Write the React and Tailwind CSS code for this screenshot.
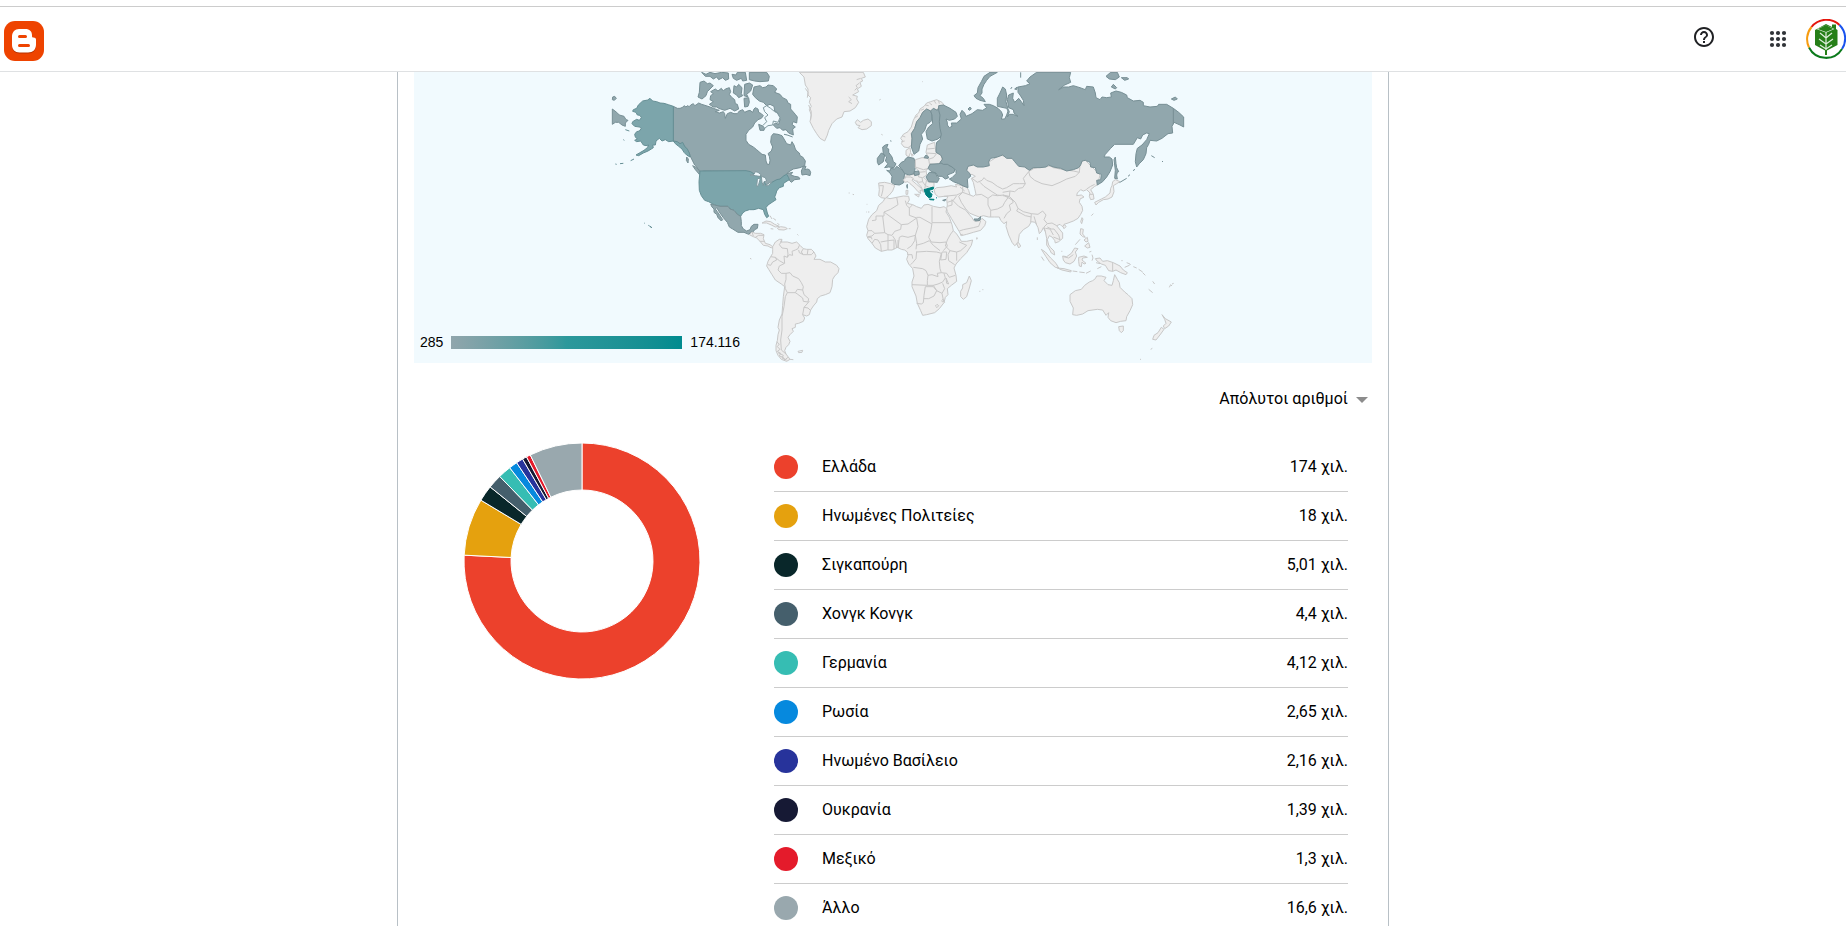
import React, { useState } from "react";

const countries = [
  { name: "Ελλάδα", label: "174 χιλ.", value: 174116, color: "#ec412c" },
  { name: "Ηνωμένες Πολιτείες", label: "18 χιλ.", value: 18000, color: "#e5a10e" },
  { name: "Σιγκαπούρη", label: "5,01 χιλ.", value: 5010, color: "#09272a" },
  { name: "Χονγκ Κονγκ", label: "4,4 χιλ.", value: 4400, color: "#455f6c" },
  { name: "Γερμανία", label: "4,12 χιλ.", value: 4120, color: "#36bdb3" },
  { name: "Ρωσία", label: "2,65 χιλ.", value: 2650, color: "#0689de" },
  { name: "Ηνωμένο Βασίλειο", label: "2,16 χιλ.", value: 2160, color: "#27339b" },
  { name: "Ουκρανία", label: "1,39 χιλ.", value: 1390, color: "#161934" },
  { name: "Μεξικό", label: "1,3 χιλ.", value: 1300, color: "#e41b2b" },
  { name: "Άλλο", label: "16,6 χιλ.", value: 16600, color: "#99a8ae" },
];

// map fills
const NONE = { fill: "#eeeeee", stroke: "#c8c8c8" };
const LOW = { fill: "#91a7ad", stroke: "#778f95" };
const MID = { fill: "#7ca5ab", stroke: "#668f95" };
const HIGH = { fill: "#00807f", stroke: "#00807f" };
const LINE = { fill: "none", stroke: "#c8c8c8" };
const WATER = { fill: "#f1fafe", stroke: "#7f989e" };

// every region is drawn around its own origin
const regions = [
  {
    name: "north-america",
    at: "translate(558 -21)",
    shapes: [
      [LOW, "M220 124L232 130 240 130 248 127 252 122 258 126 262 122 268 125 272 120 280 116 284 122 288 120 296 114 305 118 318 122 330 126 340 130 352 134 358 136 346 140 358 144 370 140 374 146 376 160 382 146 392 142 402 146 412 146 418 138 428 134 434 142 442 138 450 136 458 142 462 132 466 128 474 132 476 142 484 146 490 152 484 160 474 164 464 174 458 186 446 196 438 208 438 226 446 238 460 246 470 254 486 268 496 270 498 288 502 298 508 298 510 286 508 274 504 266 514 258 518 246 512 232 514 214 520 206 534 208 546 212 552 222 560 236 572 240 576 230 582 240 586 252 590 258 598 264 600 272 608 276 616 288 614 302 600 308 580 312 570 318 560 326 578 322 572 330 584 334 596 336 600 342 584 344 574 352 568 346 560 334 540 344 520 352 505 358 490 362 438 320 310 318 300 322 294 310 284 300 278 288 272 276 268 264 254 244 240 236 228 232 220 228Z"],
      [LOW, "M604 318L610 304 618 304 614 314 622 312 628 314 632 322 630 332 618 328 606 330Z"],
      [LOW, "M278 302L290 308 302 322 298 328 286 314ZM260 276l5 6 -1 12 -5 -8Z"],
      [LOW, "M300 52L312 48 322 56 330 54 340 62 330 72 322 80 318 92 306 102 294 96 298 82Z"],
      [LOW, "M332 92L340 86 332 80 346 72 354 78 364 70 370 78 376 72 388 68 392 80 388 88 394 96 404 104 406 116 412 118 416 132 404 138 390 130 374 136 356 130 350 126 340 126 328 118 340 110 330 104Z"],
      [LOW, "M402 62L410 66 416 58 426 68 424 86 428 92 416 98 410 90 400 84ZM434 58L448 54 458 60 452 78 440 88 444 96 432 92ZM432 100L446 98 448 112 444 124 434 126Z"],
      [LOW, "M462 66L480 62 488 68 498 66 504 60 520 62 530 72 524 82 540 88 548 98 560 104 564 114 572 118 572 132 586 148 592 156 590 174 580 170 576 178 586 186 578 192 580 210 566 204 558 194 548 196 540 188 530 190 520 180 526 174 536 178 540 164 532 142 524 138 522 124 510 118 500 122 490 112 478 108 466 98 458 88Z"],
      [LOW, "M476 178L486 182 494 188 492 196 480 196ZM504 146l8 4 -2 10 -8 -4ZM552 208l10 2 16 6"],
      [LOW, "M305 22L318 28 330 22 345 26 365 22 385 24 386 42 376 46 368 38 356 44 350 36 340 42 330 34 316 34ZM396 28L408 30 412 22 436 22 440 46 428 48 424 40 410 46 400 40ZM448 22L500 22 508 34 505 48 480 50 464 48 448 44Z"],
      [LOW, "M37 132L50 142 58 150 72 154 78 164 84 166 76 174 76 184 66 180 56 172 46 172 37 178ZM38 96l6 -2 5 6 -6 6 -6 -2Z"],
      [MID, "M220 124L205 119 192 115 180 114 170 110 158 108 150 100 143 105 128 108 115 120 110 130 100 134 98 139 108 142 112 150 120 151 124 158 118 166 110 163 98 170 96 176 104 184 118 186 124 190 118 198 110 200 104 208 106 216 112 222 104 226 110 230 122 228 130 240 138 242 146 240 142 248 132 256 118 264 108 270 116 272 130 264 144 258 154 252 160 248 158 240 166 240 168 228 178 220 186 228 196 224 206 230 220 228Z"],
      [MID, "M220 228L232 230 240 236 248 232 254 244 262 252 268 264 270 276 260 270 252 262 246 252 236 244 226 236Z"],
      [MID, "M92 287l10 -5M60 296l10 -1M46 297l4 1M76 194l12 4M70 224l3 2M133 474l2 2M145 481l4 2M150 484l4 2 1 3Z"],
      [MID, "M300 318L438 317 452 320 464 328 478 334 490 340 494 354 500 362 512 354 530 344 540 342 552 332 560 328 566 338 568 344 558 350 550 356 550 364 538 368 530 378 528 386 524 396 528 404 516 412 504 420 498 428 502 444 506 454 500 458 494 448 490 434 476 430 462 434 448 434 436 438 428 444 422 454 412 448 402 436 390 432 384 424 360 424 344 420 326 410 314 406 304 392 298 376 297 350Z"],
      [WATER, "M450 330L462 328 466 320 474 322 484 330 478 334 466 332ZM470 364L472 344 478 338 480 344 475 362ZM484 334L496 338 500 348 492 350 490 362 486 352ZM496 362L510 352 516 352 504 362ZM490 128L500 122 512 130 524 140 532 144 540 158 534 172 520 168 518 180 504 182 494 190 488 182 500 170 494 158 504 150 494 140Z"],
      [LOW, "M332 418L344 420 360 424 384 424 390 432 402 436 412 448 422 454 424 470 424 482 430 492 440 498 450 494 454 484 462 478 474 478 472 490 464 494 460 500 452 502 446 508 432 502 414 502 398 492 388 486 382 472 370 458 360 444 350 428 346 432 352 440 360 452 368 464 364 468 354 458 350 448 342 442 342 432 336 426Z"],
    ],
  },
  {
    name: "atlantic",
    at: "translate(978 -21)",
    shapes: [
      [NONE, "M178 22L192 36 196 60 204 72 204 90 212 98 208 112 214 124 208 134 214 150 210 170 220 190 230 206 240 220 254 228 262 210 266 196 276 176 290 162 306 156 312 140 330 138 346 128 356 112 350 102 352 94 338 90 356 80 352 72 364 64 360 52 368 48 364 40 376 36 370 22Z"],
      [LINE, "M196 70l8 12 -2 16M206 120l8 20 -2 24M326 96l8 8 -8 6 10 6M344 76l8 -8 -4 -6 10 -8M350 44l12 -4"],
      [NONE, "M346 172L352 164 362 172 370 166 384 162 394 170 394 182 380 192 366 194 354 188 360 182 350 180Z"],
      [LINE, "M418 105l4 -2M424 208l4 2M547 50h2M326 384l3 0M338 388l4 1M380 418h2M378 441h2M384 441h4"],
      [NONE, "M66 474L78 468 92 470 104 478 118 484 106 486 94 480 80 474ZM112 490L122 485 136 487 142 491 132 495 116 494ZM146 491h6M92 491l8 1"],
      [LINE, "M90 452l6 10M100 460l8 6M112 474l6 6M172 508l3 3"],
    ],
  },
  {
    name: "south-america",
    at: "translate(978 444)",
    shapes: [
      [NONE, "M28 44L36 36 46 40 62 40 72 44 70 56 76 70 90 74 98 80 94 84 84 78 70 76 60 64 50 54 40 50Z"],
      [LINE, "M46 52L56 46 72 46M60 64h12M36 36l4 12M30 115l4 2"],
      [NONE, "M98 80L106 66 118 58 126 58 122 66 130 66 142 66 156 70 170 66 180 76 190 86 200 88 214 88 222 96 228 108 222 118 240 118 256 126 272 126 290 136 297 146 294 158 284 168 278 178 276 200 270 218 256 224 242 228 232 236 230 246 220 258 212 270 208 284 200 288 188 284 194 294 190 304 176 310 166 312 166 322 156 326 160 334 150 344 144 352 150 364 146 374 138 382 134 392 138 402 150 418 140 424 124 418 114 406 108 392 108 376 112 362 114 344 118 330 114 322 118 300 126 282 128 256 130 230 134 200 124 192 106 180 96 164 86 148 80 138 84 124 92 110 98 100 98 88Z"],
      [LINE, "M126 62L118 74 126 84 142 86 144 102 142 112 148 104 158 106 156 94 166 90 174 86 178 76M190 86L184 96 190 104M204 88L202 102M222 96L214 104 190 104 178 98 176 90M142 112L132 108 134 130 118 138 114 150 124 160 138 160M92 110L106 112 110 120 98 126 92 136 84 134M106 112L118 122 132 130M138 160L150 158 158 168 176 176 184 188 190 200 188 210 172 208 166 218 142 218 136 206 134 192 138 178 138 160M142 218L136 230 132 260 126 290 126 330 122 360 124 390 138 402M188 210L192 224 206 236 204 246 190 244 188 234 172 222 166 218M208 244L192 262 188 284M192 262L204 264 212 272"],
      [LINE, "M110 366l8 6 -6 8 8 8 -8 6 10 6 -4 8 12 4 4 8 10 -8M114 398l16 8 -4 8 14 6M150 418l10 1M174 394l14 -3 -2 6 -10 1Z"],
    ],
  },
  {
    name: "africa",
    at: "translate(978 444)",
    shapes: [
      [NONE, "M436 -68L450 -64 470 -68 490 -72 506 -71 508 -60 502 -50 518 -46 530 -40 544 -35 552 -45 564 -47 580 -41 600 -37 612 -40 620 -34 618 -24 628 -8 636 14 640 32 650 42 658 54 664 64 680 64 698 60 694 76 680 98 662 116 648 132 642 144 648 166 650 184 634 196 622 206 624 224 616 232 612 248 598 266 584 278 560 284 548 286 542 272 532 250 528 228 516 200 516 186 522 168 518 146 506 132 500 118 504 106 502 96 494 90 484 88 472 82 456 90 442 90 424 94 406 84 396 70 384 56 380 46 384 32 380 20 386 -2 396 -16 410 -28 416 -44 430 -56Z"],
      [LINE, "M470 -68L474 -46 452 -32 432 -24 432 -12 408 -12 408 0 396 2M432 -24L440 -18 484 14 504 12 530 -6M428 -12L434 38 404 40 396 32 384 32M484 14L482 28 464 34 456 46 444 44M508 -36L508 -14 530 -6 534 20 526 46M496 -58L500 -44 508 -36 518 -46M530 -8L540 -8 576 12M576 -40V8H632M576 10L572 34 566 52 574 66M478 52L486 48 504 52 526 46 524 62 514 78 502 86M474 84L478 52M526 46L530 70 528 88M528 76L550 70 568 62 580 76 600 92M574 66L600 68 618 66 622 78 610 92M640 32L632 42 622 60 616 78 630 92 650 96 662 92 680 76 658 66M630 92L624 104 626 122 644 134M650 96V122M606 96L620 96 618 118 602 120ZM530 96L560 94 590 96 604 100 598 124 600 146 604 158 592 160 594 170 576 164 564 166 558 152 548 146 520 142M530 94L528 116 518 128 512 134M502 104L516 104 518 116M564 166L562 182 562 196 516 194M562 196L580 196 594 192 608 186 616 174 612 160M556 200L552 226 550 248 544 252 530 250M556 200L580 200 590 212 582 228 566 236 552 236M580 196L590 212 606 220 614 206 608 190M604 158L620 160 628 172 646 166M618 174l8 18 -6 -2ZM606 220l4 20 4 8"],
      [LINE, "M384 50L396 48 404 40M382 52h12l2 6M396 70L404 58 414 60 422 74 424 94M422 66L444 62 444 90M434 38L444 44 444 62 462 60 462 88M458 48L466 60 470 84M474 60V84M586 258l5 -5 5 4 -5 6ZM605 242l4 -4 3 5 -4 3Z"],
      [NONE, "M688 168L694 182 688 204 680 230 670 238 662 230 662 214 668 204 668 194 680 188Z"],
      [LINE, "M718 214h3M727 209h3M708 54h5"],
    ],
  },
  {
    name: "europe",
    at: "translate(978 -21)",
    shapes: [
      [NONE, "M516 240L504 248 492 246 484 236 488 228 482 220 490 208 504 200 514 186 520 166 528 150 536 144 540 132 552 124 560 114 572 110 590 104 606 112 612 120 598 124 592 136 580 130 572 138 560 132 548 142 540 158 530 170 524 190 514 206Z"],
      [LINE, "M486 212l10 4M484 230l10 -2M526 158l8 -6M542 136l10 -4M556 120l10 2M568 114l8 6M582 106l6 10M596 108l2 8"],
      [LOW, "M572 138L576 150 576 166 570 172 560 178 554 196 544 208 548 222 540 238 536 258 522 268 514 246 516 220 514 206 524 190 530 170 540 158 548 142 560 132Z"],
      [LOW, "M592 136L598 124 604 140 600 160 606 190 606 210 594 222 576 228 562 222 558 200 566 186 578 176 576 150 572 138 580 130Z"],
      [NONE, "M498 256L510 248 512 262 506 276 498 270ZM514 266l6 4 -4 4Z"],
      [LOW, "M428 246L436 240 444 238 440 248 446 252 446 262 456 276 460 290 468 296 462 308 446 306 434 308 444 296 436 288 440 276 430 268ZM412 280L424 264 434 270 430 290 416 300 412 292ZM452 226l1 4"],
      [NONE, "M490 336L506 330 524 328 548 334 556 342 566 352 582 352 582 368 554 374 550 382 544 366 530 350 520 344Z"],
      [LOW, "M440 316L450 318 452 310 464 312 470 304 486 314 496 318 492 336 490 354 478 360 462 358 454 352 456 334 450 324ZM502 358v12l-2 -8Z"],
      [LOW, "M476 302L484 292 494 288 496 282 504 276 522 280 526 296 526 308 522 326 508 330 494 326 484 310Z"],
      [NONE, "M526 284L546 278 566 280 570 294 568 308 558 316 560 330 548 338 536 336 536 318 526 308Z"],
      [LINE, "M526 306L550 314 568 310M536 322L556 320M530 346L536 352 548 350 546 338M548 350L556 362 554 372M560 344L556 362 566 366"],
      [LOW, "M522 320L536 318 538 328 524 332Z"],
      [NONE, "M416 354L434 352 452 356 464 362 458 378 448 390 436 400 424 398 416 392 418 374Z"],
      [LINE, "M418 362L430 362 428 378 424 394"],
      [NONE, "M490 344L500 336 512 336 520 340 516 346 530 358 544 370 548 378 540 376 542 386 534 380 522 366 510 356 504 350 494 352ZM524 388L538 388 536 396ZM498 376L504 376 503 388 498 388Z"],
      [NONE, "M562 240L584 232 586 250 590 264 604 270 606 288 592 298 568 296 566 280 558 262Z"],
      [LINE, "M562 252L584 250M560 264L588 266M568 282L580 278 590 266"],
      [LOW, "M552 278L558 270 566 276 564 280Z"],
      [LOW, "M564 310L570 298 596 296 618 292 628 302 646 308 642 322 622 330 626 338 616 342 606 334 594 334 588 324 574 320Z"],
      [LOW, "M558 336L568 322 586 324 592 336 598 340 592 352 566 350Z"],
      [HIGH, "M552 374L580 366 580 372 568 376 570 382 576 388 574 396 566 398 558 390ZM568 402L582 403 582 405 570 404ZM576 378l2 4M588 398l3 1"],
      [LOW, "M608 406L618 403 614 408Z"],
    ],
  },
  {
    name: "asia",
    at: "translate(1638 -21)",
    shapes: [
      [NONE, "M20 320L20 300 80 295 120 270 160 280 200 310 300 300 370 280 420 330 412 360 404 364 392 374 400 388 402 402 392 404 388 394 390 384 380 374 370 378 362 374 352 384 350 392 364 390 372 396 360 402 358 412 366 424 368 436 362 448 354 460 340 468 324 474 312 478 312 486 306 484 300 478 290 482 298 492 308 504 308 520 296 530 286 534 284 526 276 516 268 512 262 524 266 540 272 548 282 558 284 570 274 564 268 552 260 540 260 520 256 500 250 488 244 500 238 506 234 488 226 472 214 470 206 484 190 494 178 508 174 534 164 542 156 532 146 510 138 484 140 470 132 476 122 466 118 456 104 456 86 456 70 452 58 456 42 450 28 444 16 430 14 432 24 444 36 458 42 468 58 468 66 460 78 470 74 482 62 496 40 502 20 508 4 512 -2 500 -14 480 -26 460 -38 440 -40 430 -38 420 -40 402 -36 394 -48 394 -64 396 -74 388 -78 374 -70 368 -48 366 -26 362 -10 366 -14 358 8 362 20 366 26 376 30 390 40 394 48 388 44 370 40 352 34 340 46 334 36 328 24 332Z"],
      [LINE, "M36 340L52 352 66 346 72 338 80 346 96 352 112 364 128 372 140 368 160 356 178 356 196 356 190 340 206 320M196 356L188 368 176 370 164 380 150 378M206 320L222 310 240 306 262 298 280 308 310 314 340 318 358 322 346 334 320 342 300 352 276 362 246 356 224 346 210 334 206 320M358 322L360 300 368 288M380 372L392 364 404 358M388 388h12M48 390L64 388 84 400 98 390 112 392 130 390 144 398 134 412 128 424 112 432 92 436 84 420 84 400M60 352L72 364 96 380 112 390 124 392M144 398L156 404 160 412 148 420 152 436 140 446 132 460M92 436V456M130 390L150 396 166 412 174 430 190 440 214 446 234 448 248 438 258 450 252 464 262 476 252 486 256 500M174 430L170 438 196 452 214 456M214 446L212 472M222 454L230 480M262 476L276 474 290 482M262 486L274 492 282 492 296 510 300 524 280 516M256 490L270 492 280 510M8 382L-4 394 4 412 16 430M8 362L8 382 30 390M-48 394L-10 390 8 382M-24 404L-4 424 14 434M-10 392L-20 406 -38 412M-38 424L-24 420 -24 404M-2 498L10 494 40 488 56 484 62 468M128 382L150 378 148 394 128 392M0 366L14 378"],
      [LOW, "M42 462L54 462 62 455 60 466 46 468Z"],
      [LOW, "M454 66L460 58 470 68 466 72ZM438 34L452 22 472 22 478 36 466 44 448 42ZM484 38L502 38 506 42 494 46ZM634 102L646 96 652 102 642 106ZM462 284L466 276 468 296 470 308 476 320 472 322 470 330 472 342 464 340 466 316ZM478 353L500 340M504 334l6 -5M520 318l4 -6M574 272l10 6M606 289l3 1"],
      [NONE, "M458 350L466 344 480 350 470 356 460 362 462 380 456 396 444 402 430 404 416 412 408 420 404 412 424 402 436 396 450 384 452 370 456 362ZM394 452l6 -6M362 470l4 -12 3 4 -4 14ZM0 510l8 -2M48 522l5 -1"],
    ],
  },
  {
    name: "russia",
    at: "translate(1338 -21)",
    shapes: [
      [LOW, "M236 122L250 120 270 130 288 142 292 154 284 162 268 166 258 162 262 172 262 180 268 188 276 184 274 174 290 174 304 162 300 148 306 136 314 144 318 154 336 146 352 134 368 136 380 128 372 118 388 118 400 122 414 130 424 140 428 150 424 162 434 162 440 150 444 138 440 130 412 124 412 100 420 84 428 66 436 72 440 90 438 110 444 132 448 140 442 156 448 148 460 148 474 154 462 144 460 134 446 128 442 104 446 90 460 84 458 100 464 112 476 100 484 110 492 122 490 106 480 90 474 82 474 66 496 62 510 56 500 48 510 36 530 22 632 22 628 38 632 52 614 60 596 74 612 66 626 66 640 62 660 68 676 74 680 64 700 66 706 84 708 98 720 104 726 96 740 98 754 96 752 84 768 78 784 82 800 90 802 98 820 108 840 106 850 112 850 122 870 126 892 124 896 118 920 118 940 130 956 142 971 156 971 186 960 180 942 172 936 184 938 204 924 206 906 220 890 228 870 226 866 238 860 248 858 266 850 284 838 296 830 306 826 290 828 266 832 250 846 240 860 224 868 206 860 204 848 210 842 222 832 218 826 228 820 238 798 238 764 238 752 250 736 268 732 276 748 276 756 282 758 300 750 320 740 336 728 350 712 360 710 346 722 344 724 328 710 324 706 308 692 306 690 292 676 286 666 288 662 300 656 308 640 314 620 318 602 310 580 306 566 300 558 306 540 308 520 308 508 316 494 306 476 304 464 290 456 280 440 280 428 270 412 276 392 280 386 290 388 302 370 306 352 306 340 300 324 304 320 316 330 326 332 334 322 342 324 368 312 364 296 356 280 350 268 342 276 338 288 326 288 316 276 306 262 298 250 298 240 292 248 282 242 270 228 262 228 248 230 232 240 224 244 208 240 190 238 170 240 150 236 136ZM940 130V178"],
      [LOW, "M342 92L352 84 354 68 364 50 372 34 390 22 412 22 390 34 380 46 372 58 366 72 366 84 360 92 370 100 376 110 360 106 348 100ZM324 132l6 -6 4 6 -6 4ZM482 22v16M452 72l4 -6M464 72l8 -6 -2 8Z"],
    ],
  },
  {
    name: "oceania",
    at: "translate(1758 264)",
    shapes: [
      [NONE, "M50 250L56 248 62 258 56 264ZM112 232v8M188 198l6 -4 4 6 -6 6ZM240 222L242 206 250 208 248 222 256 232 248 230ZM252 240L262 232 264 244 258 246ZM254 258L266 248 270 262 262 264ZM226 254L240 238"],
      [NONE, "M188 288L200 290 214 280 224 264 234 266 226 276 230 288 222 304 210 312 196 308 190 300ZM124 268L136 276 152 294 168 310 176 324 166 322 150 308 138 290ZM172 324L192 326 214 332 212 336 186 330ZM236 292L252 288 262 292 248 294 246 300 258 310 252 312 246 306 244 320 238 318 236 304ZM286 296L300 294 308 304 322 302 340 308 360 318 370 330 382 338 378 344 362 338 348 330 338 334 326 332 316 316 304 312 292 304Z"],
      [LINE, "M190 290L206 294 220 284M338 307V334M218 333l14 2M238 336l16 2M258 340l14 -7M276 284l3 10 -3 8M288 308l12 3M292 326l12 -6M374 322l14 -6 4 -4M380 308l10 4M364 302h4M400 320l10 4M416 328l12 8M428 338l8 8M446 388l12 10M458 364l6 8M508 382l4 -8 4 4M516 372l5 -2M268 276l6 -2M184 274h3M124 290l8 12M452 568l5 -3M420 598h3"],
      [NONE, "M210 404L226 392 244 388 254 376 268 366 278 362 286 356 290 348 304 348 318 352 312 362 324 374 336 376 340 362 344 344 352 358 358 368 360 382 374 396 384 404 396 416 398 434 390 452 380 470 378 482 362 484 348 488 332 482 324 472 326 458 318 466 308 450 292 448 264 452 248 462 230 466 218 464 220 444 210 424ZM356 500L370 498 370 512 364 518 358 512ZM486 464L496 476 514 486 506 498 494 506 490 498 498 490 494 478ZM484 502L492 508 482 522 468 540 458 538 462 526 474 518Z"],
    ],
  },
];

function WorldMap() {
  return (
    <div className="relative bg-[#f1fafe]">
      <svg viewBox="0 0 2874 873" className="block w-full" role="img" aria-label="Χάρτης προβολών ανά χώρα">
        {regions.map((r) => (
          <g key={r.name} transform={r.at} strokeWidth="3" strokeLinejoin="round">
            {r.shapes.map(([style, d], i) => (
              <path key={i} d={d} fill={style.fill} stroke={style.stroke} />
            ))}
          </g>
        ))}
      </svg>
      <div className="absolute bottom-3 left-1.5 flex items-center gap-2 font-['Liberation_Sans',Arial,sans-serif] text-sm leading-[18px] text-black">
        <span>285</span>
        <div className="h-[13px] w-[231px] bg-linear-to-r from-[#90a5ac] via-[#2c989b] via-50% to-[#008b8f]" />
        <span>174.116</span>
      </div>
    </div>
  );
}

function point(r, angle) {
  return `${(118 + r * Math.sin(angle)).toFixed(2)} ${(118 - r * Math.cos(angle)).toFixed(2)}`;
}

function Donut() {
  const total = countries.reduce((sum, c) => sum + c.value, 0);
  let start = 0;
  return (
    <svg width="236" height="236" viewBox="0 0 236 236" role="img" aria-label="Κατανομή προβολών">
      {countries.map((c) => {
        const end = start + (c.value / total) * Math.PI * 2;
        const large = end - start > Math.PI ? 1 : 0;
        const d = `M${point(118, start)}A118 118 0 ${large} 1 ${point(118, end)}L${point(71, end)}A71 71 0 ${large} 0 ${point(71, start)}Z`;
        start = end;
        return <path key={c.name} d={d} fill={c.color} stroke="#fff" strokeWidth="1" />;
      })}
    </svg>
  );
}

function Header() {
  return (
    <header className="mt-[6px] flex h-[66px] shrink-0 items-center justify-between border-t border-b border-t-[#cccccc] border-b-[#dfe1e3] bg-white pl-1">
      <a href="#" aria-label="Blogger" className="pt-1">
        <svg width="40" height="40" viewBox="0 0 40 40">
          <rect width="40" height="40" rx="11" fill="#ee4300" />
          <path d="M15 9h6.500c4 0 6.500 2.500 6.500 6v.5c0 1 .6 1.500 1.500 1.500 1.500 0 2.500.8 2.500 2v5.500c0 5-3 8-8 8h-8.500c-4.500 0-7.500-3-7.500-7.500v-8.500C8 12 11 9 15 9z" fill="#b83200" />
          <path d="M15 8h6.500c4 0 6.500 2.500 6.500 6v1c0 1 .6 1.500 1.500 1.500 1.500 0 2.500.8 2.500 2v5c0 5-3 8-8 8h-8.500c-4.500 0-7.500-3-7.500-7.500v-8.500C8 11 11 8 15 8z" fill="#fff" />
          <path d="M15.500 15.500h6M15.500 24.500h9" stroke="#ee4300" strokeWidth="3" strokeLinecap="round" />
        </svg>
      </a>
      <div className="flex items-center">
        <button type="button" aria-label="Βοήθεια" className="mr-[52px] pb-1">
          <svg width="24" height="24" viewBox="0 0 24 24" fill="#202124">
            <path d="M11 18h2v-2h-2v2zm1-16C6.480 2 2 6.480 2 12s4.480 10 10 10 10-4.480 10-10S17.520 2 12 2zm0 18c-4.410 0-8-3.590-8-8s3.590-8 8-8 8 3.590 8 8-3.590 8-8 8zm0-14c-2.210 0-4 1.790-4 4h2c0-1.100.9-2 2-2s2 .9 2 2c0 2-3 1.750-3 5h2c0-2.250 3-2.500 3-5 0-2.210-1.790-4-4-4z" />
          </svg>
        </button>
        <button type="button" aria-label="Εφαρμογές" className="mr-[18px]">
          <svg width="20" height="24" viewBox="0 0 20 24" fill="#303338">
            {[6, 12, 18].map((y) => [2, 8, 14].map((x) => <circle key={`${x}-${y}`} cx={x + 2} cy={y} r="2.100" />))}
          </svg>
        </button>
        <button type="button" aria-label="Λογαριασμός">
          <svg width="40" height="40" viewBox="0 0 40 40">
            <g fill="none" strokeWidth="2">
              <path d="M5.500 8A19 19 0 0 1 33.500 6" stroke="#e4160d" />
              <path d="M33.500 6A19 19 0 0 1 36 30" stroke="#1a53ee" />
              <path d="M36 30A19 19 0 0 1 3 28.500" stroke="#0c7a1c" />
              <path d="M3 28.500A19 19 0 0 1 5.500 8" stroke="#f79c10" />
            </g>
            <path d="M20 5l6 3V5.500h4V10l1.500 1v15L20 32 9 26V11z" fill="#267f18" />
            <path d="M12 10l8-3 7 3-7 3zM20 12v22M20 19l-6-5M20 19l6-5M20 25l-7-5M20 25l7-5M20 30l-6-4M20 30l6-4" fill="none" stroke="#dfeedd" strokeWidth="1.200" />
            <path d="M12 10l8-4 7 4-7 3z" fill="#267f18" />
            <path d="M20 31v5" stroke="#267f18" strokeWidth="2" />
          </svg>
        </button>
      </div>
    </header>
  );
}

export default function App() {
  const [mode, setMode] = useState("absolute");

  return (
    <div className="flex h-screen flex-col overflow-hidden bg-white font-[Roboto,'Noto_Sans',sans-serif] text-base text-black">
      <Header />
      <main className="flex min-h-0 flex-1 justify-center overflow-hidden pr-[60px]">
        <section className="h-max min-h-full w-full max-w-[992px] border-x border-[#b8c0c6]">
          <div className="px-4">
            <WorldMap />
          </div>

          <div className="mb-2 flex h-[72px] items-center justify-end pr-5">
            <div className="relative">
              <select
                aria-label="Μορφή αριθμών"
                value={mode}
                onChange={(e) => setMode(e.target.value)}
                className="appearance-none bg-transparent pr-5 text-right leading-6 outline-none"
              >
                <option value="absolute">Απόλυτοι αριθμοί</option>
              </select>
              <span className="pointer-events-none absolute top-[10px] right-0 border-x-[6px] border-t-[6px] border-x-transparent border-t-[#8c8c8c]" />
            </div>
          </div>

          <div className="flex items-start pr-10">
            <div className="w-[376px] shrink-0 pl-[66px]">
              <Donut />
            </div>
            <table className="flex-1 border-separate border-spacing-0">
              <tbody className="block w-full">
                {countries.map((c) => (
                  <tr key={c.name} className="flex h-[49px] items-center border-b border-[#cccccc]">
                    <td className="w-12 p-0">
                      <span className="block size-6 rounded-full" style={{ backgroundColor: c.color }} />
                    </td>
                    <td className="flex-1 p-0 leading-6">{c.name}</td>
                    <td className="p-0 text-right leading-6">{c.label}</td>
                  </tr>
                ))}
              </tbody>
            </table>
          </div>
        </section>
      </main>
    </div>
  );
}
